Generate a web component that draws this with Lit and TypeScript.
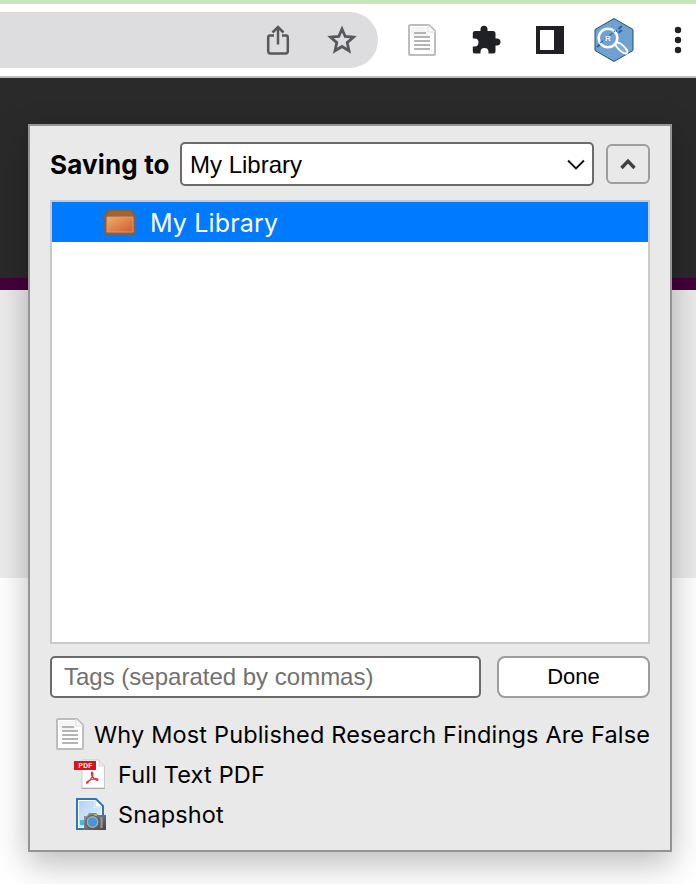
import { LitElement, html, css, svg } from "lit";
import { customElement } from "lit/decorators.js";

const page = svg`
  <path d="M3 1H21L27 7V30Q27 31 26 31H2Q1 31 1 30V2Q1 1 3 1Z" fill="#fff" stroke="#bdbdbd" stroke-width="2"/>
  <path d="M3 3H20V12H3Z" fill="#f5f5f5"/>
  <path d="M20 1V8H27Z" fill="#fafafa" stroke="#ddd"/>
  <path d="M6 9H18M6 13H22M6 17H22M6 21H22M6 25H22" stroke="#b4b4b4" stroke-width="1.8"/>`;

@customElement("app-root")
export class AppRoot extends LitElement {
  static styles = css`
    :host {
      display: block;
      position: relative;
      width: 696px;
      height: 884px;
      overflow: hidden;
      background: #fff;
      color: #000;
      font-family: Inter, "Liberation Sans", sans-serif;
    }
    * { box-sizing: border-box; }
    svg { display: block; flex: none; }
    .strip { height: 4px; background: #c7e6bb; }
    .toolbar {
      display: flex;
      align-items: center;
      height: 74px;
      border-bottom: 2px solid #bdbdbd;
      background: #fff;
    }
    .address {
      display: flex;
      align-items: center;
      justify-content: flex-end;
      width: 378px;
      height: 56px;
      padding-right: 20px;
      gap: 32px;
      border-radius: 0 28px 28px 0;
      background: #dddddf;
    }
    .actions { display: flex; align-items: center; }
    .doc { margin-left: 30px; }
    .puzzle { margin-left: 36px; }
    .side { margin-left: 33px; }
    .hex { margin-left: 30px; }
    .dots { margin-left: 40px; }
    .banner { height: 212px; background: #2a2a2a; border-bottom: 12px solid #45003b; }
    .band { height: 288px; background: #ebebeb; }
    .popup {
      position: absolute;
      left: 28px;
      top: 124px;
      width: 644px;
      height: 728px;
      border: 2px solid #949494;
      background: #e9e9e9;
      padding: 16px 20px;
      box-shadow: 0 12px 32px rgba(0, 0, 0, 0.27);
      display: flex;
      flex-direction: column;
    }
    .row { display: flex; align-items: center; }
    .title { width: 130px; padding-top: 1px; font-size: 26px; letter-spacing: 0.15px; font-weight: 700; line-height: 43px; white-space: nowrap; }
    .select {
      display: flex;
      align-items: center;
      justify-content: space-between;
      width: 414px;
      height: 44px;
      padding: 1px 7px 0 8px;
      border: 2px solid #6b6b6b;
      border-radius: 5px;
      background: #fff;
      font: 24px "Liberation Sans", Arial, sans-serif;
    }
    .toggle {
      display: grid;
      place-items: center;
      width: 44px;
      height: 40px;
      margin-left: 12px;
      border: 2px solid #9d9d9d;
      border-radius: 6px;
    }
    .tree { flex: none; height: 444px; margin-top: 14px; border: 2px solid #c9c9cb; background: #fff; }
    .node {
      display: flex;
      align-items: center;
      height: 40px;
      padding-left: 52px;
      gap: 14px;
      background: #007aff;
      color: #fff;
      font-size: 25px;
      letter-spacing: 0.15px;
    }
    .node span { padding-top: 2px; }
    .entry { margin-top: 12px; gap: 16px; }
    .tags {
      width: 431px;
      height: 42px;
      padding-left: 12px;
      border: 2px solid #6b6b6b;
      border-radius: 5px;
      background: #fff;
      color: #717171;
      font: 24px/38px "Liberation Sans", Arial, sans-serif;
    }
    .done {
      width: 153px;
      height: 42px;
      border: 2px solid #9d9d9d;
      border-radius: 8px;
      background: #fff;
      text-align: center;
      font: 22px/38px "Liberation Sans", Arial, sans-serif;
    }
    .items { margin-top: 16px; }
    .item { display: flex; align-items: center; height: 40px; font-size: 23.5px; letter-spacing: 0.16px; white-space: nowrap; }
    .item.top { padding-left: 6px; gap: 10px; }
    .item.child { padding-left: 24px; gap: 12px; }
  `;

  render() {
    return html`
      <div class="strip"></div>
      <div class="toolbar">
        <div class="address">
          <svg width="32" height="32" viewBox="0 0 32 32" fill="none" stroke="#57585b" stroke-width="2.5">
            <path d="M12 11.5H8Q6.200 11.500 6.200 13.500V27Q6.200 29.500 8.500 29.500H23.500Q25.800 29.500 25.800 27V13.500Q25.800 11.500 24 11.500H20M16 20.500V4M10.500 8.500L16 3L21.500 8.500"/>
          </svg>
          <svg width="32" height="32" viewBox="0 0 32 32" fill="none" stroke="#57585b" stroke-width="2.8">
            <path d="M16 5L19.200 12.500L27.400 13.200L21.200 18.600L23 26.800L16 22.500L9 26.800L10.800 18.600L4.600 13.200L12.800 12.500Z"/>
          </svg>
        </div>
        <div class="actions">
          <svg class="doc" width="28" height="32" viewBox="0 0 28 32">${page}</svg>
          <svg class="puzzle" width="31" height="30" viewBox="0 0 31 30">
            <path fill="#202124" d="M3 6H8.500V4.200A3.500 3.500 0 0 1 15.500 4.200V6H21Q23.500 6 23.500 8.500V13.500H25A3.300 3.300 0 0 1 25 20.500H23.500V26Q23.500 28.500 21 28.500H16.500V27A4 4 0 0 0 8.500 27V28.500H3Q.800 28.500 .800 26.500V21.500H2.500A4 4 0 0 0 2.500 13.500H.800V8Q.800 6 3 6Z"/>
          </svg>
          <svg class="side" width="28" height="28" viewBox="0 0 28 28">
            <path fill="#202124" d="M0 0H28V28H0Z"/><path fill="#fff" d="M4 4H18V24H4Z"/>
          </svg>
          <svg class="hex" width="40" height="46" viewBox="0 0 40 46">
            <path d="M20 1.500L39 12.500V33.500L20 44.500L1 33.500V12.500Z" fill="#6fa2d2" stroke="#294f73"/>
            <path d="M3 30L28 9M19 20L28 13" stroke="#255f9c" stroke-width="2" stroke-dasharray="5 2"/>
            <circle cx="14" cy="21" r="9.300" fill="#6fa2d2" stroke="#fff" stroke-width="2.600"/>
            <path d="M6 26L21 14" stroke="#38729f" stroke-width="1.500" stroke-dasharray="4 2"/>
            <text x="11" y="24" font-family="Liberation Sans, sans-serif" font-size="8" font-weight="700" fill="#e7f2fb">R</text>
            <ellipse cx="27.500" cy="31" rx="7.500" ry="2.800" transform="rotate(42 27.500 31)" fill="#7facd7" stroke="#fff" stroke-width="1.800"/>
          </svg>
          <svg class="dots" width="8" height="28" viewBox="0 0 8 28" fill="#202124">
            <circle cx="4" cy="4" r="3.200"/><circle cx="4" cy="14" r="3.200"/><circle cx="4" cy="24" r="3.200"/>
          </svg>
        </div>
      </div>
      <div class="banner"></div>
      <div class="band"></div>

      <div class="popup">
        <div class="row">
          <div class="title">Saving to</div>
          <div class="select">
            <span>My Library</span>
            <svg width="18" height="12" viewBox="0 0 18 12" fill="none" stroke="#111" stroke-width="1.800"><path d="M1 1.500L9 9.500L17 1.500"/></svg>
          </div>
          <div class="toggle">
            <svg width="16" height="12" viewBox="0 0 16 12" fill="none" stroke="#404040" stroke-width="3.400"><path d="M1.500 10L8 3.200L14.500 10"/></svg>
          </div>
        </div>
        <div class="tree">
          <div class="node">
            <svg width="32" height="26" viewBox="0 0 32 26">
              <defs><linearGradient id="box" x1="0" y1="0" x2="1" y2="1"><stop offset="0" stop-color="#efad6d"/><stop offset="1" stop-color="#ce5c2d"/></linearGradient></defs>
              <path d="M1 6L5 1H27L31 6V24Q31 25 30 25H2Q1 25 1 24Z" fill="#8d603e" stroke="#85603f" stroke-width="1.500"/>
              <path d="M5 2.500H27L29 7H3Z" fill="#a5652f"/>
              <path d="M3 8H29V23H3Z" fill="url(#box)" stroke="#e79860"/>
            </svg>
            <span>My Library</span>
          </div>
        </div>
        <div class="row entry">
          <div class="tags">Tags (separated by commas)</div>
          <div class="done">Done</div>
        </div>
        <div class="items">
          <div class="item top">
            <svg width="28" height="32" viewBox="0 0 28 32">${page}</svg>
            <span>Why Most Published Research Findings Are False</span>
          </div>
          <div class="item child">
            <svg width="32" height="32" viewBox="0 0 32 32">
              <path d="M8 2H25L30.500 8V30H8Z" fill="#fff" stroke="#c9c9c9"/>
              <path d="M25 2V8H30.500Z" fill="#eee" stroke="#d4d4d4"/>
              <path d="M7.500 30.500H31" stroke="#aaa"/>
              <path d="M0 3H22V12H0Z" fill="#dc1119"/>
              <text x="4.500" y="10" font-family="Liberation Sans, sans-serif" font-size="6.500" font-weight="700" letter-spacing=".3" fill="#fff">PDF</text>
              <path d="M18 14Q16.500 15.500 18.500 18.500Q20.500 22 23.500 22.500Q25 21 21.500 20.700Q17 21 13.500 23.500Q11.500 25.500 13.500 25Q16 22.500 18.500 18Q19.500 14.500 18 14Z" fill="none" stroke="#db3338" stroke-width="1.200"/>
            </svg>
            <span>Full Text PDF</span>
          </div>
          <div class="item child">
            <svg width="32" height="32" viewBox="0 0 32 32">
              <defs>
                <linearGradient id="paper" x1="0" y1="0" x2="1" y2="1"><stop offset="0" stop-color="#b3d4f5"/><stop offset="1" stop-color="#e3f1fd"/></linearGradient>
                <linearGradient id="cam" x1="0" y1="0" x2="1" y2="1"><stop offset="0" stop-color="#999"/><stop offset="1" stop-color="#444"/></linearGradient>
              </defs>
              <path d="M3 1H22L29 8V31H3Z" fill="#fff" stroke="#3476b5" stroke-width="2"/>
              <path d="M5 3H20V10H27V29H5Z" fill="url(#paper)"/>
              <path d="M21 2V9H28" fill="#fff" stroke="#b7d1ea"/>
              <path d="M6 22H10V27H6Z" fill="#31bff2"/>
              <path d="M10 18H13L15 15H22L24 17H32V32H10Z" fill="url(#cam)"/>
              <circle cx="18.500" cy="24" r="6.500" fill="#aaa" stroke="#555"/>
              <circle cx="18.500" cy="24" r="4.600" fill="#4297df"/>
              <path d="M27.500 19V30" stroke="#999" stroke-width="2"/>
              <path d="M20 17H23" stroke="#d2b45e" stroke-width="1.500"/>
            </svg>
            <span>Snapshot</span>
          </div>
        </div>
      </div>
    `;
  }
}
